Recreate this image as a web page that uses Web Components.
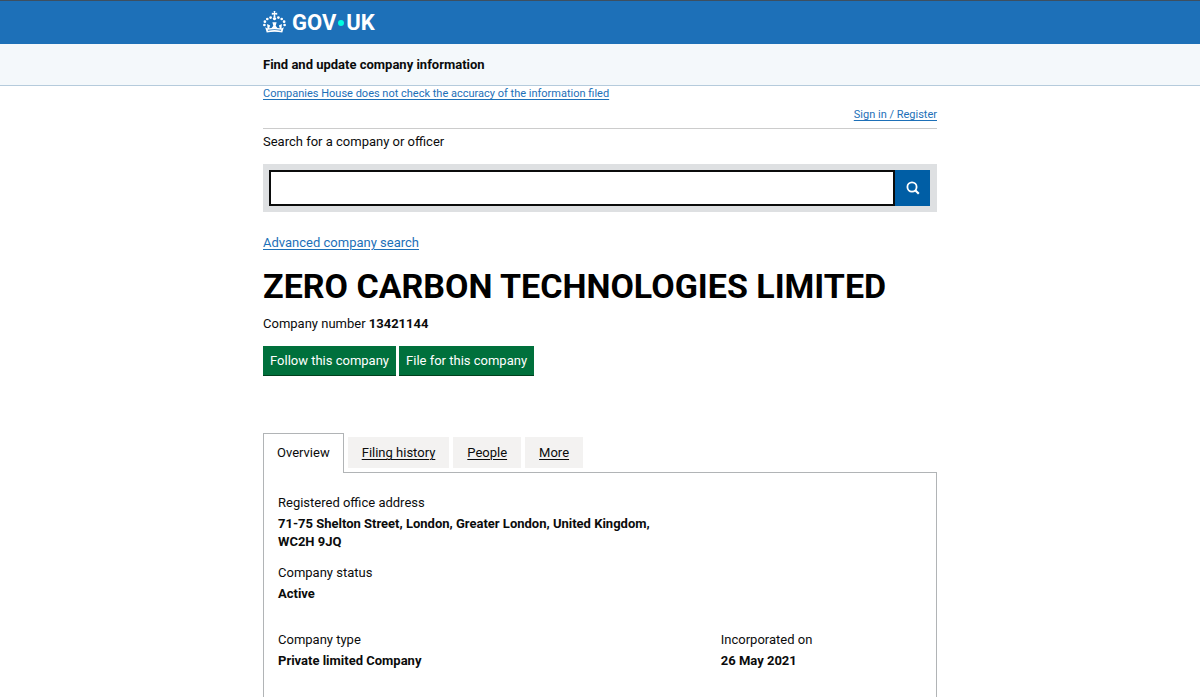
<!DOCTYPE html>
<html lang="en">
<head>
<meta charset="utf-8">
<meta name="viewport" content="width=device-width, initial-scale=1">
<title>ZERO CARBON TECHNOLOGIES LIMITED overview</title>
<style>
  body {
    margin: 0;
    background: #fff;
    color: #0b0c0c;
    font-family: Roboto, "Liberation Sans", sans-serif;
    font-size: 13px;
    line-height: 18px;
  }
</style>
</head>
<body>
<company-page></company-page>

<script>
const linkStyles = `
  a {
    color: #1d70b8;
    text-decoration: underline;
    text-decoration-thickness: 1px;
    text-underline-offset: 2px;
  }
`;

class PageWidth extends HTMLElement {
  constructor() {
    super();
    this.attachShadow({ mode: "open" }).innerHTML = `
      <style>
        :host {
          display: block;
          box-sizing: border-box;
          max-width: 706px;
          margin: 0 auto;
          padding: 0 16px;
        }
      </style>
      <slot></slot>
    `;
  }
}

class SiteHeader extends HTMLElement {
  constructor() {
    super();
    this.attachShadow({ mode: "open" }).innerHTML = `
      <style>
        :host {
          display: block;
          background: #1d70b8;
          border-top: 1px solid #3d4f60;
        }
        a {
          display: inline-flex;
          align-items: center;
          gap: 6px;
          height: 43px;
          color: #fff;
          text-decoration: none;
          font-size: 22px;
          font-weight: 700;
          line-height: 24px;
        }
        svg {
          display: block;
          margin-bottom: 2px;
        }
        .wordmark {
          display: flex;
          align-items: center;
        }
        .dot {
          width: 6px;
          height: 6px;
          margin: 0 2px;
          border-radius: 50%;
          background: #00ffe0;
        }
      </style>
      <page-width>
        <a href="#">
          <svg width="23" height="22" viewBox="0 0 23 22" fill="#fff" aria-hidden="true">
            <path d="M10.600 0h1.800l-.3 2 2.100-.3v2l-2.100-.3.4 2.500h-2l.4-2.500-2.100.3v-2l2.100.3z"/>
            <circle cx="11.500" cy="7.600" r="1.700"/>
            <circle cx="7.600" cy="6.600" r="1.350"/><circle cx="15.400" cy="6.600" r="1.350"/>
            <circle cx="4.300" cy="8" r="1.350"/><circle cx="18.700" cy="8" r="1.350"/>
            <circle cx="1.900" cy="10.700" r="1.350"/><circle cx="21.100" cy="10.700" r="1.350"/>
            <circle cx="1.400" cy="14" r="1.350"/><circle cx="21.600" cy="14" r="1.350"/>
            <path d="M3.700 21.500 2.200 16.200l2.300 1.200-.4-4.400 3 1.500-.9 2.700 2.400-.2 1.700-2.200-.9-3.500h4.200l-.9 3.500 1.700 2.200 2.400.2-.9-2.700 3-1.500-.4 4.400 2.300-1.200-1.500 5.300q-7.800-1.500-15.600 0zM5 19.700q6.500-1.200 13 0l.2-.9q-6.700-1.200-13.400 0z" fill-rule="evenodd"/>
          </svg>
          <span class="wordmark"><span>GOV</span><span class="dot"></span><span>UK</span></span>
        </a>
      </page-width>
    `;
  }
}

class ServiceBar extends HTMLElement {
  constructor() {
    super();
    this.attachShadow({ mode: "open" }).innerHTML = `
      <style>
        :host {
          display: block;
          padding: 12px 0 11px;
          background: #f4f8fb;
          border-bottom: 1px solid #b5cbdc;
          font-weight: 700;
        }
      </style>
      <page-width><slot></slot></page-width>
    `;
  }
}

class CompanySearch extends HTMLElement {
  constructor() {
    super();
    this.attachShadow({ mode: "open" }).innerHTML = `
      <style>
        :host { display: block; }
        label {
          display: block;
          margin-bottom: 13px;
        }
        .box {
          display: flex;
          padding: 6px 7px 6px 6px;
          background: #dee0e2;
        }
        input {
          flex: 1;
          min-width: 0;
          box-sizing: border-box;
          height: 36px;
          margin: 0;
          padding: 4px 6px;
          border: 2px solid #0b0c0c;
          border-radius: 0;
          background: #fff;
          font: inherit;
        }
        button {
          display: grid;
          place-items: center;
          width: 35px;
          padding: 0;
          border: 0;
          background: #005ea5;
        }
      </style>
      <label for="search">Search for a company or officer</label>
      <div class="box">
        <input id="search" type="text">
        <button type="submit" aria-label="Search">
          <svg width="14" height="14" viewBox="0 0 14 14" fill="none" stroke="#fff" stroke-width="1.800" aria-hidden="true">
            <circle cx="6" cy="6" r="4.600"/>
            <path d="m9.200 9.200 3.600 3.600" stroke-width="2.200"/>
          </svg>
        </button>
      </div>
    `;
  }
}

class ActionButton extends HTMLElement {
  constructor() {
    super();
    this.attachShadow({ mode: "open" }).innerHTML = `
      <style>
        :host { display: block; }
        button {
          padding: 6px 7px 5px;
          border: 0;
          border-bottom: 1px solid #00401e;
          border-radius: 0;
          background: #00703c;
          color: #fff;
          font: inherit;
        }
      </style>
      <button type="button"><slot></slot></button>
    `;
  }
}

class CompanyTab extends HTMLElement {
  constructor() {
    super();
    this.attachShadow({ mode: "open" }).innerHTML = `
      <style>
        :host {
          display: block;
          margin-bottom: 4px;
          padding: 7px 14px 6px;
          background: #f3f2f1;
        }
        :host([selected]) {
          margin-bottom: -1px;
          padding: 10px 13px 11px;
          border: 1px solid #b1b4b6;
          border-bottom: 0;
          background: #fff;
        }
        a {
          color: #0b0c0c;
          text-decoration: underline;
          text-decoration-thickness: 1px;
          text-underline-offset: 2px;
        }
        :host([selected]) a { text-decoration: none; }
      </style>
      <a href="#"><slot></slot></a>
    `;
  }
}

class CompanyTabs extends HTMLElement {
  constructor() {
    super();
    this.attachShadow({ mode: "open" }).innerHTML = `
      <style>
        :host { display: block; }
        /* the selected tab covers the top edge of the panel */
        nav {
          position: relative;
          display: flex;
          align-items: flex-end;
          gap: 4px;
        }
        .panel {
          padding: 21px 14px 30px;
          border: 1px solid #b1b4b6;
        }
      </style>
      <nav aria-label="Company"><slot name="tab"></slot></nav>
      <div class="panel"><slot></slot></div>
    `;
  }
}

class CompanyFact extends HTMLElement {
  constructor() {
    super();
    this.attachShadow({ mode: "open" }).innerHTML = `
      <style>
        :host { display: block; }
        dl, dd { margin: 0; }
        dt { margin-bottom: 3px; }
        dd {
          max-width: 400px;
          font-weight: 700;
        }
      </style>
      <dl>
        <dt>${this.getAttribute("label")}</dt>
        <dd><slot></slot></dd>
      </dl>
    `;
  }
}

class CompanyPage extends HTMLElement {
  constructor() {
    super();
    this.attachShadow({ mode: "open" }).innerHTML = `
      <style>
        :host { display: block; }
        ${linkStyles}
        .notice, .account {
          font-size: 11px;
          line-height: 14px;
        }
        .notice { padding-top: 1px; }
        .account {
          display: flex;
          justify-content: flex-end;
          padding: 7px 0 6px;
          border-bottom: 1px solid #ccc;
        }
        company-search { margin: 4px 0 22px; }
        h1 {
          margin: 16px 0 11px;
          font-size: 34px;
          line-height: 36px;
          color: #000;
        }
        p { margin: 0; }
        .actions {
          display: flex;
          flex-wrap: wrap;
          gap: 3px;
          margin: 13px 0 57px;
        }
        .status { margin-top: 13px; }
        .columns {
          display: grid;
          grid-template-columns: 11fr 5fr;
          margin-top: 28px;
        }
      </style>
      <site-header></site-header>
      <service-bar>Find and update company information</service-bar>
      <page-width>
        <div class="notice"><a href="#">Companies House does not check the accuracy of the information filed</a></div>
        <div class="account"><a href="#">Sign in / Register</a></div>
        <company-search></company-search>
        <a href="#">Advanced company search</a>
        <h1>ZERO CARBON TECHNOLOGIES LIMITED</h1>
        <p>Company number <strong>13421144</strong></p>
        <div class="actions">
          <action-button>Follow this company</action-button>
          <action-button>File for this company</action-button>
        </div>
        <company-tabs>
          <company-tab slot="tab" selected>Overview</company-tab>
          <company-tab slot="tab">Filing history</company-tab>
          <company-tab slot="tab">People</company-tab>
          <company-tab slot="tab">More</company-tab>
          <company-fact label="Registered office address">71-75 Shelton Street, London, Greater London, United Kingdom, WC2H 9JQ</company-fact>
          <company-fact class="status" label="Company status">Active</company-fact>
          <div class="columns">
            <company-fact label="Company type">Private limited Company</company-fact>
            <company-fact label="Incorporated on">26 May 2021</company-fact>
          </div>
        </company-tabs>
      </page-width>
    `;
  }
}

customElements.define("page-width", PageWidth);
customElements.define("site-header", SiteHeader);
customElements.define("service-bar", ServiceBar);
customElements.define("company-search", CompanySearch);
customElements.define("action-button", ActionButton);
customElements.define("company-tab", CompanyTab);
customElements.define("company-tabs", CompanyTabs);
customElements.define("company-fact", CompanyFact);
customElements.define("company-page", CompanyPage);
</script>
</body>
</html>
